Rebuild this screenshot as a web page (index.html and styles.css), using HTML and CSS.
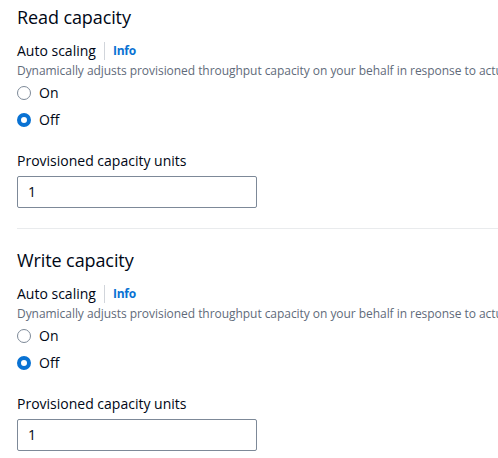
FILE: index.html
```html
<!DOCTYPE html>
<html>
<head>
<meta charset="utf-8">
<link rel="stylesheet" href="styles.css">
</head>
<body>
<div class="page">
  <section class="section">
    <h2 class="title">Read capacity</h2>
    <div class="field">
      <div class="label-row"><span class="label">Auto scaling</span><span class="info">Info</span></div>
      <div class="desc">Dynamically adjusts provisioned throughput capacity on your behalf in response to actual traffic patterns.</div>
      <div class="radios">
        <label class="radio"><span class="dot"></span><span>On</span></label>
        <label class="radio"><span class="dot checked"></span><span>Off</span></label>
      </div>
    </div>
    <div class="field units">
      <div class="label">Provisioned capacity units</div>
      <div class="input">1</div>
    </div>
  </section>
  <hr class="divider">
  <section class="section">
    <h2 class="title">Write capacity</h2>
    <div class="field">
      <div class="label-row"><span class="label">Auto scaling</span><span class="info">Info</span></div>
      <div class="desc">Dynamically adjusts provisioned throughput capacity on your behalf in response to actual traffic patterns.</div>
      <div class="radios">
        <label class="radio"><span class="dot"></span><span>On</span></label>
        <label class="radio"><span class="dot checked"></span><span>Off</span></label>
      </div>
    </div>
    <div class="field units">
      <div class="label">Provisioned capacity units</div>
      <div class="input">1</div>
    </div>
  </section>
</div>
</body>
</html>
```
FILE: styles.css
```css
html, body { margin: 0; padding: 0; background: #fff; }
body { font-family: "Open Sans", "Noto Sans", sans-serif; color: #000716; overflow: hidden; }
.page { padding: 6px 0 0 17px; width: 481px; overflow: hidden; }
.section { display: flex; flex-direction: column; }
.title { margin: 0; font-size: 18px; font-weight: 400; line-height: 22px; letter-spacing: -0.1px; }
.field { display: flex; flex-direction: column; }
.label-row { display: flex; align-items: center; margin-top: 13px; height: 20px; }
.label { font-size: 14px; line-height: 20px; }
.info { font-size: 12px; font-weight: 700; color: #0972d3; border-left: 1px solid #d1d5db; margin-left: 8px; padding-left: 8px; line-height: 18px; letter-spacing: -0.2px; }
.desc { font-size: 12px; line-height: 16px; color: #5f6b7a; white-space: nowrap; margin-top: 2px; letter-spacing: -0.05px; overflow: hidden; }
.radios { display: flex; flex-direction: column; gap: 7px; margin-top: 4px; }
.radio { display: flex; align-items: center; gap: 8px; font-size: 14px; line-height: 20px; }
.dot { width: 14px; height: 14px; box-sizing: border-box; border: 1.5px solid #7d8998; border-radius: 50%; }
.dot.checked { border: 4.5px solid #0972d3; }
.units { margin-top: 21px; }
.units .label { margin-bottom: 5px; }
.input { width: 240px; height: 32px; box-sizing: border-box; border: 1px solid #7d8998; border-radius: 2px; padding: 0 10px; font-size: 14px; line-height: 30px; }
.divider { border: 0; border-top: 1px solid #e9ebed; margin: 20px 0 20px 0; }
```
